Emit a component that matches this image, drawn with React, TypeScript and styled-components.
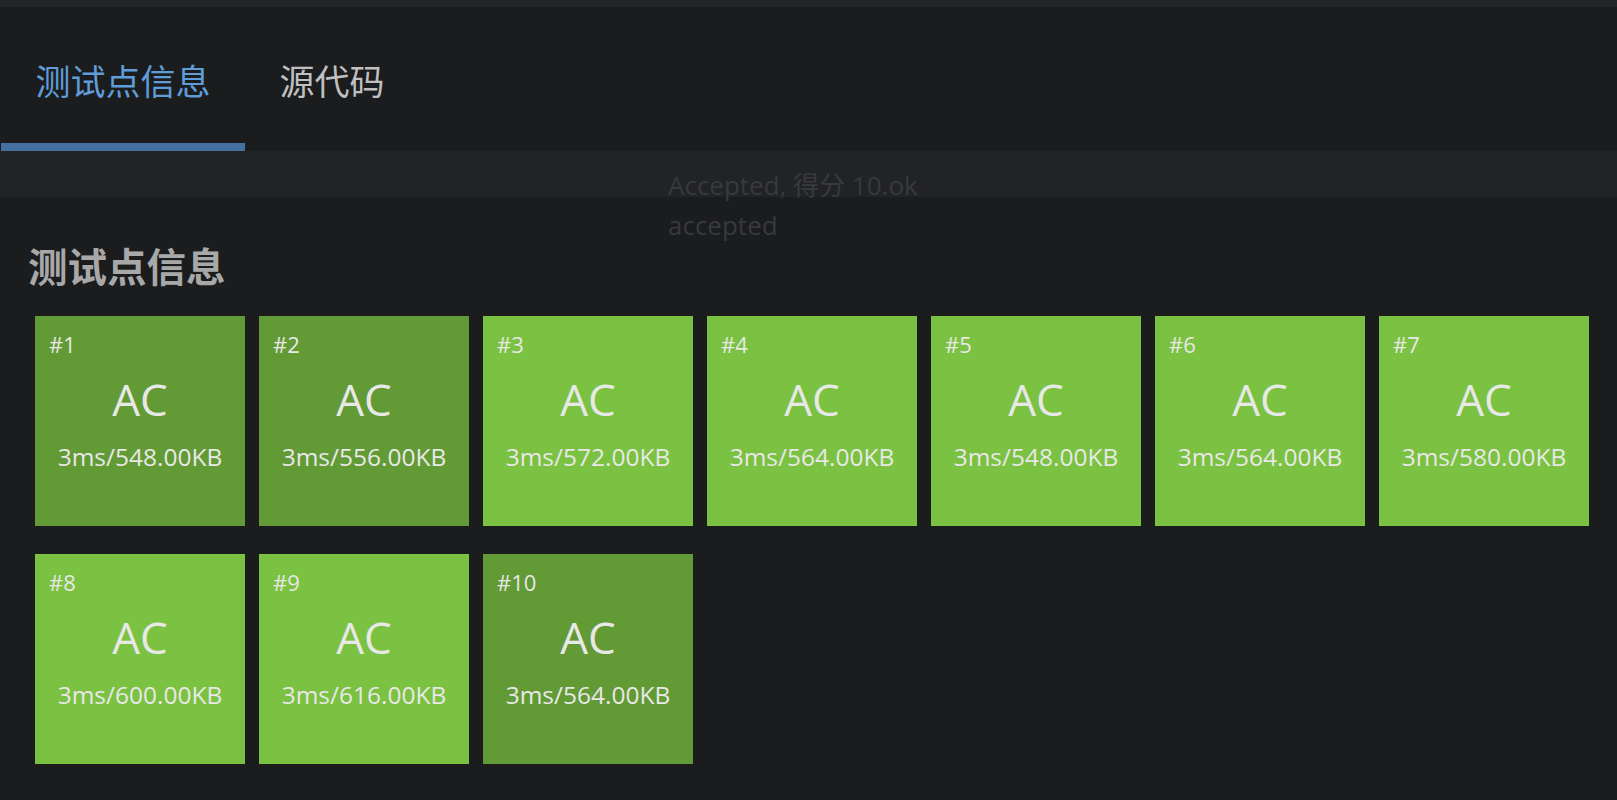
import React from "react";
import styled, { createGlobalStyle } from "styled-components";

const Global = createGlobalStyle`
  html, body {
    margin: 0;
    padding: 0;
    background: #1b1c1e;
    overflow: hidden;
  }
  body {
    font-family: "Open Sans", "Noto Sans CJK SC", sans-serif;
  }
`;

const Page = styled.div`
  position: relative;
  width: 1617px;
  height: 800px;
  background: #1b1c1e;
  border-top: 7px solid #232427;
  box-sizing: border-box;
`;

const TabBar = styled.div`
  display: flex;
  padding-left: 1px;
  background: #1b1c1e;
`;

const Tab = styled.div<{ $active?: boolean }>`
  padding: 47px 34.5px 38px;
  font-family: "Noto Sans CJK SC", sans-serif;
  font-size: 35px;
  line-height: 51px;
  color: ${(p) => (p.$active ? "#5f9cd8" : "#bfbfbf")};
  border-bottom: 8px solid ${(p) => (p.$active ? "#44709f" : "transparent")};
`;

const Band = styled.div`
  height: 46px;
  background: #222326;
`;

const Tooltip = styled.div`
  position: absolute;
  left: 657px;
  top: 147px;
  width: 336px;
  box-sizing: border-box;
  padding: 11px 11px 14px;
  background: rgba(255, 255, 255, 0.003);
  font-family: "Open Sans", "Noto Sans CJK SC", sans-serif;
  font-size: 26px;
  line-height: 40px;
  color: #38393c;
`;

const Main = styled.div`
  padding: 39px 28px 0;
`;

const Heading = styled.h2`
  margin: 0 0 22px;
  font-family: "Noto Sans CJK SC", sans-serif;
  font-weight: 700;
  font-size: 39.5px;
  line-height: 58px;
  color: #a8a8a8;
`;

const Grid = styled.div`
  display: grid;
  grid-template-columns: repeat(7, 210px);
  column-gap: 14px;
  row-gap: 28px;
  padding: 0 7px;
`;

const Card = styled.div<{ $dark?: boolean }>`
  width: 210px;
  height: 210px;
  box-sizing: border-box;
  padding: 13px 14px 0;
  display: flex;
  flex-direction: column;
  background: ${(p) => (p.$dark ? "#629a35" : "#7bc142")};
  color: #e8e8e6;
  font-family: "Open Sans", sans-serif;
`;

const CaseNo = styled.div`
  font-size: 22px;
  line-height: 30px;
`;

const Verdict = styled.div`
  margin-top: 12px;
  text-align: center;
  font-size: 44px;
  line-height: 56px;
`;

const Detail = styled.div`
  margin-top: 13px;
  text-align: center;
  font-size: 24.5px;
  line-height: 34px;
  white-space: nowrap;
  margin-left: -14px;
  margin-right: -14px;
`;

const cases = [
  { n: 1, mem: "548.00", dark: true },
  { n: 2, mem: "556.00", dark: true },
  { n: 3, mem: "572.00", dark: false },
  { n: 4, mem: "564.00", dark: false },
  { n: 5, mem: "548.00", dark: false },
  { n: 6, mem: "564.00", dark: false },
  { n: 7, mem: "580.00", dark: false },
  { n: 8, mem: "600.00", dark: false },
  { n: 9, mem: "616.00", dark: false },
  { n: 10, mem: "564.00", dark: true },
];

export default function App() {
  return (
    <>
      <Global />
      <Page>
        <TabBar>
          <Tab $active>测试点信息</Tab>
          <Tab>源代码</Tab>
        </TabBar>
        <Band />
        <Main>
          <Heading>测试点信息</Heading>
          <Grid>
            {cases.map((c) => (
              <Card key={c.n} $dark={c.dark}>
                <CaseNo>#{c.n}</CaseNo>
                <Verdict>AC</Verdict>
                <Detail>3ms/{c.mem}KB</Detail>
              </Card>
            ))}
          </Grid>
        </Main>
        <Tooltip>
          Accepted, 得分 10.ok
          <br />
          accepted
        </Tooltip>
      </Page>
    </>
  );
}
